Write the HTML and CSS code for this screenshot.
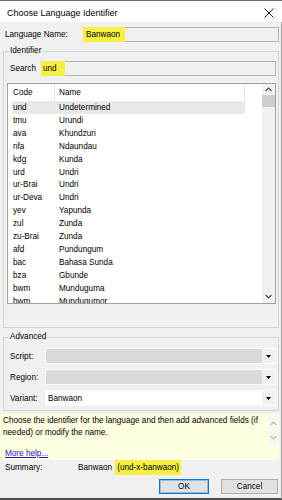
FILE: index.html
```html
<!DOCTYPE html>
<html>
<head>
<meta charset="utf-8">
<link rel="stylesheet" href="styles.css">
</head>
<body>
<div class="dialog">
  <div class="titlebar">
    <span class="title">Choose Language Identifier</span>
    <svg class="close" width="10" height="10" viewBox="0 0 10 10"><path d="M0.5 0.5L9.5 9.5M9.5 0.5L0.5 9.5" stroke="#1e1e1e" stroke-width="1" fill="none"/></svg>
  </div>
  <div class="content">
    <div class="name-row">
      <span class="name-label">Language Name:</span>
      <div class="field name-field"><span class="hl hl-name">Banwaon</span></div>
    </div>
    <fieldset class="group group-id">
      <legend>Identifier</legend>
      <div class="search-row">
        <span class="search-label">Search</span>
        <div class="field search-field"><span class="hl hl-search">und</span></div>
      </div>
      <div class="list">
        <div class="list-main">
          <div class="list-head"><span class="c-code">Code</span><span class="c-name">Name</span></div>
          <div class="row sel"><span class="c-code">und</span><span class="c-name">Undetermined</span></div>
          <div class="row"><span class="c-code">tmu</span><span class="c-name">Urundi</span></div>
          <div class="row"><span class="c-code">ava</span><span class="c-name">Khundzuri</span></div>
          <div class="row"><span class="c-code">nfa</span><span class="c-name">Ndaundau</span></div>
          <div class="row"><span class="c-code">kdg</span><span class="c-name">Kunda</span></div>
          <div class="row"><span class="c-code">urd</span><span class="c-name">Undri</span></div>
          <div class="row"><span class="c-code">ur-Brai</span><span class="c-name">Undri</span></div>
          <div class="row"><span class="c-code">ur-Deva</span><span class="c-name">Undri</span></div>
          <div class="row"><span class="c-code">yev</span><span class="c-name">Yapunda</span></div>
          <div class="row"><span class="c-code">zul</span><span class="c-name">Zunda</span></div>
          <div class="row"><span class="c-code">zu-Brai</span><span class="c-name">Zunda</span></div>
          <div class="row"><span class="c-code">afd</span><span class="c-name">Pundungum</span></div>
          <div class="row"><span class="c-code">bac</span><span class="c-name">Bahasa Sunda</span></div>
          <div class="row"><span class="c-code">bza</span><span class="c-name">Gbunde</span></div>
          <div class="row"><span class="c-code">bwm</span><span class="c-name">Munduguma</span></div>
          <div class="row"><span class="c-code">bwm</span><span class="c-name">Mundugumor</span></div>
        </div>
        <div class="vscroll">
          <div class="sb-btn"><svg width="7" height="5" viewBox="0 0 7 5"><path d="M0.6 4L3.5 1.1L6.4 4" stroke="#555" stroke-width="1.3" fill="none"/></svg></div>
          <div class="sb-thumb"></div>
          <div class="sb-track"></div>
          <div class="sb-btn sb-down"><svg width="7" height="5" viewBox="0 0 7 5"><path d="M0.6 1L3.5 3.9L6.4 1" stroke="#555" stroke-width="1.3" fill="none"/></svg></div>
        </div>
      </div>
    </fieldset>
    <fieldset class="group group-adv">
      <legend>Advanced</legend>
      <div class="combo-row">
        <span class="combo-label">Script:</span>
        <div class="combo combo-disabled"><span class="combo-value"></span><span class="combo-arrow"><svg width="5" height="3" viewBox="0 0 5 3"><path d="M0 0H5L2.5 3Z" fill="#000"/></svg></span></div>
      </div>
      <div class="combo-row">
        <span class="combo-label">Region:</span>
        <div class="combo combo-disabled"><span class="combo-value"></span><span class="combo-arrow"><svg width="5" height="3" viewBox="0 0 5 3"><path d="M0 0H5L2.5 3Z" fill="#000"/></svg></span></div>
      </div>
      <div class="combo-row">
        <span class="combo-label">Variant:</span>
        <div class="combo"><span class="combo-value">Banwaon</span><span class="combo-arrow"><svg width="5" height="3" viewBox="0 0 5 3"><path d="M0 0H5L2.5 3Z" fill="#000"/></svg></span></div>
      </div>
    </fieldset>
    <div class="info">
      <div class="info-box">
        <p class="info-text">Choose the identifier for the language and then add advanced fields (if<br>needed) or modify the name.</p>
        <div class="info-scroll">
          <svg width="7" height="5" viewBox="0 0 7 5"><path d="M0.6 4L3.5 1.1L6.4 4" stroke="#b8b8b8" stroke-width="1.1" fill="none"/></svg>
          <svg width="7" height="5" viewBox="0 0 7 5"><path d="M0.6 1L3.5 3.9L6.4 1" stroke="#b8b8b8" stroke-width="1.1" fill="none"/></svg>
        </div>
      </div>
      <a class="more-help" href="#">More help...</a>
    </div>
    <div class="summary">
      <span class="sum-label">Summary:</span>
      <span class="sum-name">Banwaon</span>
      <span class="hl hl-sum">(und-x-banwaon)</span>
    </div>
    <div class="buttons">
      <button class="btn btn-ok">OK</button>
      <button class="btn btn-cancel">Cancel</button>
    </div>
  </div>
</div>
</body>
</html>
```
FILE: styles.css
```css
* { box-sizing: border-box; }
html, body { margin: 0; padding: 0; }
body {
  width: 282px;
  height: 500px;
  overflow: hidden;
  background: #f0f0f0;
  font-family: "Liberation Sans", Arial, sans-serif;
  font-size: 8.2px;
  color: #000;
}
.dialog { height: 500px; display: flex; flex-direction: column; }

.titlebar {
  flex: 0 0 22px;
  background: #fff;
  border-top: 1px solid #6b6b6b;
  display: flex;
  align-items: center;
  padding: 3px 0 0 7px;
}
.title { font-size: 9px; line-height: 12px; }
.close { margin-left: auto; margin-right: 8px; }

.content {
  flex: 1;
  min-height: 0;
  display: flex;
  flex-direction: column;
  border-right: 1px solid #a3a3a3;
  border-bottom: 2px solid #4d4d4d;
}

.name-row { display: flex; align-items: center; height: 15px; margin-top: 5px; }
.name-label { flex: 0 0 83px; padding-left: 5px; }
.field {
  height: 15px;
  border: 1px solid #b4b4b4;
  background: #f0f0f0;
  display: flex;
  align-items: stretch;
}
.name-field { flex: 1; margin-right: 2px; }
.hl { background: #f5f043; display: flex; align-items: center; }
.field .hl { margin: -1px 0 -1px -1px; }
.hl-name { width: 42px; padding-left: 3px; }

.group {
  margin: 4px 2px 0 3px;
  padding: 0;
  border: 1px solid #d3d3d3;
  min-width: 0;
}
.group legend { margin-left: 5px; padding: 0 1px; line-height: 10px; }

.search-row { display: flex; align-items: center; height: 15px; margin-top: 5px; }
.search-label { flex: 0 0 37px; padding-left: 6px; }
.search-field { flex: 1; margin-right: 2px; }
.hl-search { width: 24px; padding-left: 2px; }

.list {
  margin: 7px 2px 23px 3px;
  height: 221px;
  border: 1px solid #a0a0a0;
  background: #fff;
  display: flex;
}
.list-main { flex: 1; overflow: hidden; padding-left: 4px; }
.list-head { display: flex; height: 17px; }
.list-head span { display: flex; align-items: center; }
.c-code { flex: 0 0 43px; padding-left: 1px; }
.c-name { flex: 0 0 190px; padding-left: 4px; }
.list-head .c-code { border-right: 1px solid #e5e5e5; }
.list-head .c-name { border-right: 1px solid #e5e5e5; }
.row { display: flex; align-items: center; height: 12.93px; width: 233px; }
.row.sel { background: #e8e8e8; }

.vscroll { flex: 0 0 13px; background: #f0f0f0; display: flex; flex-direction: column; }
.sb-btn { height: 11px; display: flex; align-items: center; justify-content: center; }
.sb-thumb { height: 12px; background: #cdcdcd; }
.sb-track { flex: 1; }
.sb-btn.sb-down { height: 13px; }

.group-adv { padding-bottom: 4px; }
.combo-row { display: flex; align-items: center; height: 16px; margin-top: 5px; }
.group-adv legend + .combo-row { margin-top: 6px; }
.combo-label { flex: 0 0 41px; padding-left: 6px; }
.combo {
  flex: 1;
  margin-right: 2px;
  height: 16px;
  display: flex;
  border: 1px solid #fafafa;
  background: #fff;
}
.combo-value { flex: 1; display: flex; align-items: center; padding-left: 2px; }
.combo-disabled .combo-value { background: #dadada; }
.combo-arrow {
  flex: 0 0 13px;
  background: #f0f0f0;
  display: flex;
  align-items: center;
  justify-content: center;
}

.info {
  margin: 3px 2px 0 0;
  height: 46px;
  background: #ffffe1;
  display: flex;
  flex-direction: column;
}
.info-box { display: flex; height: 33px; }
.info-text { flex: 1; margin: 0; padding: 1px 0 0 3px; line-height: 12px; }
.info-scroll {
  flex: 0 0 10px;
  margin: 2px 1px 2px 0;
  background: #f7f7f2;
  display: flex;
  flex-direction: column;
  justify-content: space-between;
  align-items: center;
  padding: 5px 0;
}
.more-help { padding-left: 5px; line-height: 13px; color: #1a1ad0; text-decoration: underline; align-self: flex-start; }

.summary { display: flex; align-items: center; height: 15px; }
.sum-label { flex: 0 0 78px; padding-left: 5px; }
.sum-name { margin-right: 3px; }
.hl-sum { height: 15px; padding: 0 2px; }

.buttons { display: flex; justify-content: flex-end; gap: 12px; margin: 4px 3px 0 0; }
.btn {
  height: 15px;
  padding: 0;
  font: inherit;
  color: #000;
  background: #e1e1e1;
  border: 1px solid #adadad;
}
.btn-ok { width: 50px; border-color: #0078d7; box-shadow: inset 0 0 0 1px rgba(0, 120, 215, 0.35); }
.btn-cancel { width: 57px; }
```
